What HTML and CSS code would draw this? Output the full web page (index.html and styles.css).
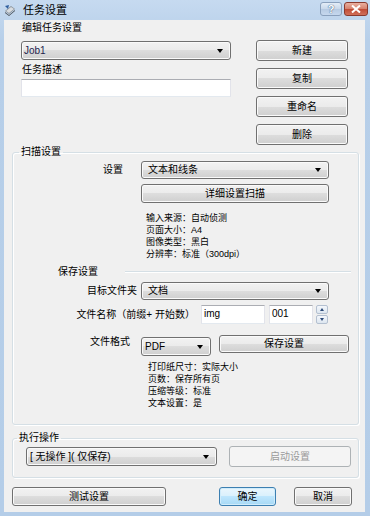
FILE: index.html
```html
<!DOCTYPE html>
<html lang="zh-CN">
<head>
<meta charset="utf-8">
<title>任务设置</title>
<link rel="stylesheet" href="styles.css">
</head>
<body>
<div class="window">
  <div class="titlebar">
    <svg class="appicon" width="12" height="12" viewBox="0 0 12 12">
      <path d="M1 7 L7 2 L11 5 L5 10 Z" fill="#8a9096"/>
      <path d="M2 7 L7 3 L10 5 L5 9 Z" fill="#d8dde2"/>
      <path d="M1 2 L5 1 L4 5 Z" fill="#2f5f9e"/>
      <path d="M1 8 L5 11 L11 6 L11 7 L5 12 L1 9 Z" fill="#4a5056"/>
    </svg>
    <span class="title">任务设置</span>
    <span class="tb-btn help">?</span>
    <span class="tb-btn close">
      <svg width="10" height="8" viewBox="0 0 10 8"><path d="M1 0.5 L9 7.5 M9 0.5 L1 7.5" stroke="#fff" stroke-width="2"/></svg>
    </span>
  </div>
  <div class="client">
    <div class="top">
      <div class="top-left">
        <div class="lbl lbl-edit">编辑任务设置</div>
        <div class="combo combo-job"><span class="job-text">Job1</span><i class="arrow"></i></div>
        <div class="lbl lbl-desc">任务描述</div>
        <div class="textbox tb-desc"></div>
      </div>
      <div class="top-buttons">
        <div class="btn">新建</div>
        <div class="btn">复制</div>
        <div class="btn">重命名</div>
        <div class="btn">删除</div>
      </div>
    </div>

    <fieldset class="group group-scan">
      <legend class="legend-scan">扫描设置</legend>
      <div class="row row-setting">
        <span class="rlabel pr-setting">设置</span>
        <div class="combo combo-wide pad6"><span>文本和线条</span><i class="arrow"></i></div>
      </div>
      <div class="btn btn-detail">详细设置扫描</div>
      <div class="info info-scan">
        <div>输入来源：自动侦测</div>
        <div>页面大小：A4</div>
        <div>图像类型：黑白</div>
        <div>分辨率：标准（300dpi）</div>
      </div>
      <div class="subhead"><span>保存设置</span><span class="sep"></span></div>
      <div class="row row-folder">
        <span class="rlabel pr-folder">目标文件夹</span>
        <div class="combo combo-wide pad6"><span>文档</span><i class="arrow"></i></div>
      </div>
      <div class="row row-filename">
        <span class="rlabel pr-filename">文件名称（前缀+ 开始数）</span>
        <div class="textbox tb-prefix">img</div>
        <div class="textbox tb-start">001</div>
        <div class="spinner">
          <span class="spin-btn"><i class="sp-up"></i></span>
          <span class="spin-btn"><i class="sp-down"></i></span>
        </div>
      </div>
      <div class="row row-format">
        <span class="rlabel pr-format">文件格式</span>
        <div class="combo combo-pdf"><span>PDF</span><i class="arrow"></i></div>
        <div class="btn btn-save">保存设置</div>
      </div>
      <div class="info info-save">
        <div>打印纸尺寸：实际大小</div>
        <div>页数：保存所有页</div>
        <div>压缩等级：标准</div>
        <div>文本设置：是</div>
      </div>
    </fieldset>

    <fieldset class="group group-action">
      <legend class="legend-action">执行操作</legend>
      <div class="row row-action">
        <div class="combo combo-action"><span>[ 无操作 ]( 仅保存)</span><i class="arrow"></i></div>
        <div class="btn btn-disabled">启动设置</div>
      </div>
    </fieldset>

    <div class="bottom">
      <div class="btn btn-test">测试设置</div>
      <div class="btn btn-ok">确定</div>
      <div class="btn btn-cancel">取消</div>
    </div>
  </div>
</div>
</body>
</html>
```
FILE: styles.css
```css
* { box-sizing: border-box; }
html, body { margin: 0; padding: 0; }
body {
  font-family: "Liberation Sans", "Noto Sans CJK SC", sans-serif;
  font-size: 10px;
  color: #000;
  background: #fff;
}
.window {
  width: 370px;
  height: 516px;
  display: flex;
  flex-direction: column;
  background: linear-gradient(#c6daf0, #b7cfe9 40px, #b4cde8);
  padding: 0 5px 4px 4px;
}
.titlebar {
  height: 20px;
  display: flex;
  align-items: center;
  margin-right: -3px;
}
.appicon { margin: 0 7px 0 0; flex: none; }
.title {
  font-size: 11px;
  line-height: 14px;
  flex: 1;
  color: #000;
}
.tb-btn {
  height: 14px;
  border-radius: 3px;
  display: flex;
  align-items: center;
  justify-content: center;
  margin-top: -3px;
}
.help {
  width: 22px;
  border: 1px solid #8aa0bc;
  background: linear-gradient(#e4edf7, #c8d8ea 50%, #b6cae2 50%, #c6d8ee);
  color: #fff;
  font-weight: bold;
  font-size: 11px;
  text-shadow: 0 0 1px #3d5a80, 0 0 1px #3d5a80;
  margin-right: 2px;
}
.close {
  width: 24px;
  border: 1px solid #8a3a2e;
  background: linear-gradient(#eab0a0, #d5806c 50%, #c04a34 50%, #d0705a);
}
.client {
  flex: 1;
  background: #f0f0f0;
}
.top {
  display: flex;
  padding-left: 17px;
  height: 126px;
}
.top-left { width: 210px; padding-top: 2px; }
.lbl { line-height: 12px; padding-left: 1px; }
.lbl-desc { margin-top: 4px; }
.combo {
  height: 18px;
  border: 1px solid #707070;
  border-radius: 3px;
  background: linear-gradient(#f2f2f2, #ebebeb 50%, #dddddd 50%, #cfcfcf);
  box-shadow: inset 0 0 0 1px #fafafa;
  display: flex;
  align-items: center;
  padding: 0 7px 0 2px;
  line-height: 12px;
  white-space: nowrap;
}
.combo > span { flex: 1; }
.pad6 { padding-left: 6px; }
.arrow {
  width: 0; height: 0;
  border-left: 3.5px solid transparent;
  border-right: 3.5px solid transparent;
  border-top: 4px solid #000;
  flex: none;
}
.combo-job { margin-top: 7px; height: 19px; }
.job-text { color: #1e1e4e; }
.textbox {
  background: #fff;
  border: 1px solid #e2e3ea;
  border-top-color: #abadb3;
  border-bottom-color: #e3e9ef;
  line-height: 12px;
  padding: 2px 2px;
  white-space: nowrap;
}
.tb-desc { margin-top: 3px; height: 18px; }
.top-buttons {
  margin-left: 25px;
  width: 92px;
  padding-top: 20px;
  display: flex;
  flex-direction: column;
  gap: 7px;
}
.btn {
  height: 21px;
  border: 1px solid #707070;
  border-radius: 3px;
  background: linear-gradient(#f2f2f2, #ebebeb 50%, #dddddd 50%, #cfcfcf);
  box-shadow: inset 0 0 0 1px #fafafa;
  display: flex;
  align-items: center;
  justify-content: center;
  line-height: 12px;
  white-space: nowrap;
}
.group {
  margin: 0 0 0 8px;
  width: 347px;
  padding: 0;
  border: 1px solid #d5dfe5;
  border-radius: 3px;
  box-shadow: inset 1px 1px 0 #fff, 1px 1px 0 #fff;
  min-inline-size: 0;
}
legend {
  line-height: 12px;
  padding: 0 2px;
}
.legend-scan { margin-left: 6px; }
.legend-action { margin-left: 4px; }
.group-scan { padding-bottom: 15px; }
.row { display: flex; align-items: center; }
.rlabel {
  width: 128px;
  flex: none;
  text-align: right;
  line-height: 12px;
  white-space: nowrap;
}
.pr-setting { padding-right: 18px; }
.pr-folder { padding-right: 4px; }
.pr-format { padding-right: 11px; }
.pr-filename { width: 188px; padding-right: 6px; }
.row-setting { margin-top: 3px; }
.combo-wide { width: 188px; }
.btn-detail { margin: 5px 0 0 128px; width: 188px; height: 19px; }
.info {
  font-size: 9px;
  line-height: 12px;
  white-space: nowrap;
}
.info-scan { margin: 9px 0 0 133px; }
.subhead {
  display: flex;
  align-items: center;
  margin: 6px 7px 0 45px;
  line-height: 12px;
}
.sep {
  flex: 1;
  margin-left: 27px;
  height: 2px;
  border-top: 1px solid #d5dfe5;
  border-bottom: 1px solid #fff;
}
.row-folder { margin-top: 4px; }
.row-filename { margin-top: 5px; }
.tb-prefix { width: 64px; height: 19px; }
.tb-start { width: 44px; height: 19px; margin-left: 4px; }
.spinner {
  margin-left: 3px;
  width: 12px;
  height: 19px;
  display: flex;
  flex-direction: column;
  gap: 1px;
}
.spin-btn {
  flex: 1;
  border: 1px solid #b4c0d0;
  border-radius: 2px;
  background: linear-gradient(#f4f7fb, #dde6f0);
  display: flex;
  align-items: center;
  justify-content: center;
}
.sp-up, .sp-down {
  width: 0; height: 0;
  border-left: 2.5px solid transparent;
  border-right: 2.5px solid transparent;
}
.sp-up { border-bottom: 3px solid #2c4a78; }
.sp-down { border-top: 3px solid #2c4a78; }
.row-format { margin-top: 11px; align-items: flex-start; }
.row-format .rlabel { margin-top: 1px; }
.combo-pdf { width: 70px; height: 19px; margin-top: 2px; padding-left: 3px; }
.btn-save { width: 130px; height: 18px; margin-left: 8px; }
.info-save { margin: 5px 0 0 135px; }
.group-action { margin-top: 7px; padding-bottom: 10px; }
.row-action { margin-top: 2px; }
.combo-action { width: 191px; height: 19px; margin-left: 13px; padding-left: 3px; }
.btn-disabled {
  width: 122px;
  margin-left: 12px;
  border-color: #adb2b5;
  background: #f4f4f4;
  box-shadow: none;
  color: #9a9a9a;
}
.bottom {
  display: flex;
  margin-top: 9px;
  padding-left: 8px;
}
.btn-test { width: 154px; height: 19px; }
.btn-ok {
  width: 57px;
  height: 19px;
  margin-left: 53px;
  border-color: #3c7fb1;
  background: linear-gradient(#eaf6fd, #d9f0fc 50%, #bee6fd 50%, #a7d9f5);
  box-shadow: inset 0 0 0 1px #d0ecfb;
}
.btn-cancel { width: 58px; height: 19px; margin-left: 18px; }
```
